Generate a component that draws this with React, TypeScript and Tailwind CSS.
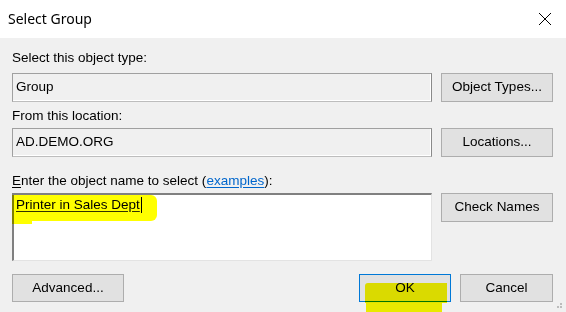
import React from "react";

const Btn = ({ children, w, h, focus }: { children: React.ReactNode; w: string; h: string; focus?: boolean }) => (
  <div
    className={`${w} ${h} shrink-0 flex items-center justify-center bg-[#e1e1e1] border ${
      focus ? "border-[#0078d7]" : "border-[#adadad]"
    } text-[13.5px] text-black`}
  >
    {children}
  </div>
);

export default function App() {
  return (
    <div className="relative w-[566px] h-[312px] overflow-hidden bg-[#f0f0f0] text-[13.5px] text-black font-['Liberation_Sans',Arial,sans-serif]">
      {/* title bar */}
      <div className="h-[38px] bg-white flex items-center justify-between pl-[8px] pr-[14px]">
        <span className="text-[14px] font-['Noto_Sans',sans-serif] leading-none text-black">Select Group</span>
        <svg width="14" height="14" viewBox="0 0 14 14">
          <path d="M1 1 L13 13 M13 1 L1 13" stroke="#000" strokeWidth="1" fill="none" />
        </svg>
      </div>

      <div className="pl-[12px] pr-[13px] pt-[12px] flex flex-col">
        <div className="h-[16px] leading-[16px]">Select this object type:</div>
        <div className="mt-[7px] flex">
          <div className="flex-1 h-[29px] flex items-center pl-[3px] bg-[#f0f0f0] border border-t-[#a0a0a0] border-l-[#a0a0a0] border-r-[#8a8a8a] border-b-[#bdbdbd] shadow-[inset_-1px_-1px_0_#ffffff]">
            Group
          </div>
          <div className="ml-[9px]">
            <Btn w="w-[112px]" h="h-[29px]">Object Types...</Btn>
          </div>
        </div>

        <div className="mt-[6px] h-[16px] leading-[16px]">From this location:</div>
        <div className="mt-[4px] flex">
          <div className="flex-1 h-[29px] flex items-center pl-[3px] bg-[#f0f0f0] border border-t-[#a0a0a0] border-l-[#a0a0a0] border-r-[#8a8a8a] border-b-[#bdbdbd] shadow-[inset_-1px_-1px_0_#ffffff]">
            AD.DEMO.ORG
          </div>
          <div className="ml-[9px]">
            <Btn w="w-[112px]" h="h-[29px]">Locations...</Btn>
          </div>
        </div>

        <div className="mt-[16px] h-[16px] leading-[16px]">
          <span className="underline underline-offset-2">E</span>nter the object name to select (
          <span className="text-[#0066cc] underline underline-offset-2">examples</span>):
        </div>
        <div className="mt-[4px] flex">
          <div className="relative flex-1 h-[68px] bg-white border-t-2 border-l-2 border-r border-b border-t-[#808080] border-l-[#808080] border-r-[#e3e3e3] border-b-[#e3e3e3] pl-[2px] pt-[2px]">
            <div className="h-[16px] leading-[16px] flex items-start">
              <span className="underline decoration-[#333] underline-offset-[2px]">Printer in Sales Dept</span>
              <span className="ml-[1px] w-px h-[16px] bg-black" />
            </div>
          </div>
          <div className="ml-[9px]">
            <Btn w="w-[112px]" h="h-[29px]">Check Names</Btn>
          </div>
        </div>

        <div className="mt-[13px] flex items-center">
          <Btn w="w-[112px]" h="h-[28px]">Advanced...</Btn>
          <div className="flex-1" />
          <Btn w="w-[92px]" h="h-[28px]" focus>OK</Btn>
          <div className="ml-[9px]">
            <Btn w="w-[93px]" h="h-[28px]">Cancel</Btn>
          </div>
        </div>
      </div>

      {/* highlighter marks */}
      <div className="absolute left-[12px] top-[195px] w-[145px] h-[26px] rounded-r-[6px] bg-[#ffff00] mix-blend-multiply" />
      <div className="absolute left-[12px] top-[220px] w-[20px] h-[4px] bg-[#ffff00] mix-blend-multiply" />
      <div className="absolute left-[365px] top-[283px] w-[82px] h-[20px] rounded-tl-[3px] bg-[#f8f800] mix-blend-multiply" />
      <div className="absolute left-[366px] top-[302px] w-[76px] h-[10px] bg-[#f8f800] mix-blend-multiply" />

      {/* size grip */}
      <div className="absolute left-[560px] top-[303px] w-[2px] h-[2px] bg-[#bcbcbc]" />
      <div className="absolute left-[557px] top-[306px] w-[2px] h-[2px] bg-[#bcbcbc]" />
      <div className="absolute left-[560px] top-[306px] w-[2px] h-[2px] bg-[#bcbcbc]" />
    </div>
  );
}
